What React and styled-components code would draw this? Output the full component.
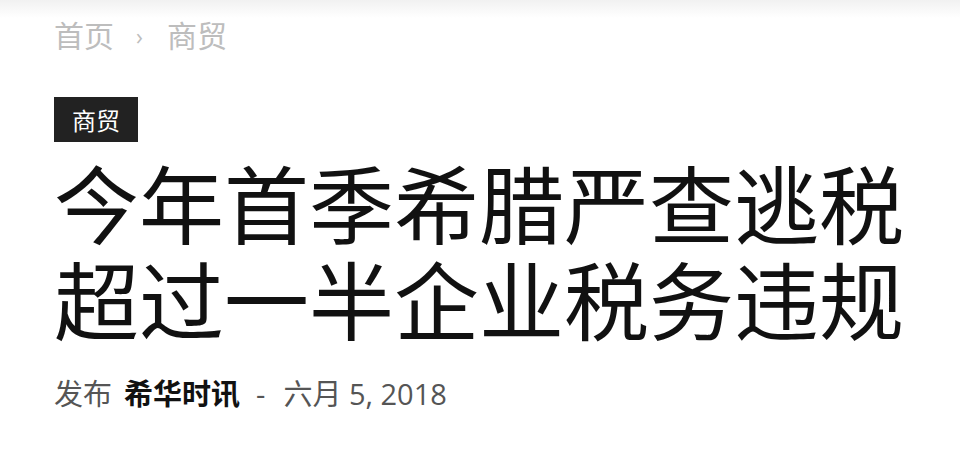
import React from "react";
import styled, { createGlobalStyle } from "styled-components";

const GlobalStyle = createGlobalStyle`
    html, body {
        margin: 0;
        padding: 0;
        background: #fff;
    }
    body {
        font-family: "Open Sans", "Noto Sans CJK SC", sans-serif;
    }
`

const Page = styled.div`
    width: 960px;
    height: 455px;
    box-sizing: border-box;
    padding: 16px 54px 0;
    background: linear-gradient(#f1f1f1 0px, #ffffff 18px);
    overflow: hidden;
`

const Breadcrumb = styled.div`
    display: flex;
    align-items: center;
    font-size: 30px;
    line-height: 40px;
    color: #bdbdbd;
`

const Separator = styled.span`
    margin: 0 24px 0 22px;
    font-size: 23px;
`

const Tag = styled.div`
    display: inline-flex;
    align-items: center;
    margin-top: 41px;
    height: 45px;
    padding: 0 18px 0 18px;
    background: #222;
    color: #fff;
    font-size: 24px;
`

const Title = styled.h1`
    margin: 15px 0 0;
    font-size: 85px;
    line-height: 96px;
    font-weight: 400;
    color: #111;
    width: 860px;
`

const Meta = styled.div`
    display: flex;
    align-items: center;
    margin-top: 25px;
    font-size: 29px;
    line-height: 40px;
    color: #555;
`

const Author = styled.span`
    margin-left: 12px;
    font-weight: 700;
    color: #111;
`

const Dash = styled.span`
    margin: 0 18px 0 16px;
`

const App = () => {
    return (
        <>
            <GlobalStyle />
            <Page>
                <Breadcrumb>
                    <span>首页</span>
                    <Separator>›</Separator>
                    <span>商贸</span>
                </Breadcrumb>
                <Tag>商贸</Tag>
                <Title>今年首季希腊严查逃税超过一半企业税务违规</Title>
                <Meta>
                    <span>发布</span>
                    <Author>希华时讯</Author>
                    <Dash>-</Dash>
                    <span>六月 5, 2018</span>
                </Meta>
            </Page>
        </>
    )
}

export default App;
